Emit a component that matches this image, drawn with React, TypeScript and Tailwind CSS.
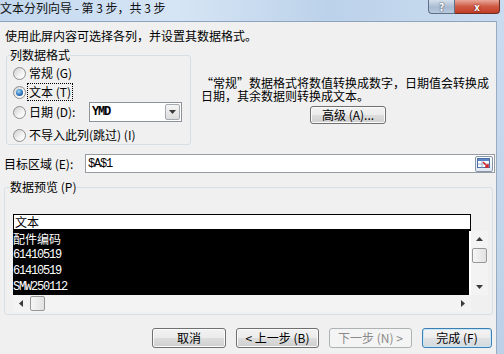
import React from "react";

// 文本分列向导 第3步 (Win7 风格对话框)

const mono = "font-['Liberation_Mono',monospace] tracking-[-1.2px]";

function Mn({ c }: { c: string }) {
  return <> ({c})</>;
}

function Radio({ checked }: { checked?: boolean }) {
  return (
    <span className="flex h-[13px] w-[13px] shrink-0 items-center justify-center rounded-full border border-[#8e8f8f] bg-[linear-gradient(135deg,#cfcfcf,#f4f4f4_60%,#ffffff)]">
      {checked && (
        <span className="h-[7px] w-[7px] rounded-full bg-[radial-gradient(circle_at_40%_35%,#9ad8f8,#2a6fb5_60%,#17457a)]" />
      )}
    </span>
  );
}

function WinButton({
  children,
  className,
  kind,
}: {
  children: React.ReactNode;
  className: string;
  kind?: "default" | "disabled";
}) {
  let look =
    "border-[#707070] text-black bg-[linear-gradient(#f2f2f2,#ebebeb_50%,#dddddd_50%,#cfcfcf)] shadow-[inset_0_0_0_1px_#fbfbfb]";
  if (kind === "default")
    look =
      "border-[#3c7fb1] text-black bg-[linear-gradient(#f4f4f4,#ececec_50%,#dfe3e6_50%,#d3d8dc)] shadow-[inset_0_0_0_1px_#c6e6f9]";
  if (kind === "disabled")
    look = "border-[#adb2b5] text-[#8a8a8a] bg-[#f4f4f4]";
  return (
    <div
      className={`flex items-center justify-center rounded-[3px] border text-[12px] leading-[14px] ${look} ${className}`}
    >
      {children}
    </div>
  );
}

function Tri({ dir }: { dir: "up" | "down" | "left" | "right" }) {
  const pts = {
    up: "0,4 3.5,0 7,4",
    down: "0,0 7,0 3.5,4",
    left: "4,0 4,7 0,3.5",
    right: "0,0 0,7 4,3.5",
  }[dir];
  const vert = dir === "up" || dir === "down";
  return (
    <svg width={vert ? 7 : 4} height={vert ? 4 : 7} viewBox={vert ? "0 0 7 4" : "0 0 4 7"}>
      <polygon points={pts} fill="#3a3a3a" />
    </svg>
  );
}

function RangeIcon() {
  return (
    <div className="flex h-[16px] w-[18px] items-center justify-center rounded-[2px] border border-[#8796a8] bg-[linear-gradient(#fdfdfd,#dfe6ee)]">
      <svg width="14" height="11" viewBox="0 0 14 11">
        <rect x="0.5" y="0.5" width="12" height="9" fill="#fff" stroke="#4a6fa5" />
        <rect x="1" y="1" width="11" height="2" fill="#5b86c4" />
        <line x1="1" y1="6" x2="12" y2="6" stroke="#9fb3cf" />
        <line x1="5" y1="3" x2="5" y2="9.5" stroke="#9fb3cf" />
        <path d="M6 4 L11 9 M8 9 L11 9 L11 6" stroke="#d4262b" strokeWidth="1.6" fill="none" />
      </svg>
    </div>
  );
}

function Thumb({ className }: { className: string }) {
  return (
    <div
      className={`rounded-[2px] border border-[#979797] bg-[linear-gradient(90deg,#f6f6f6,#e2e2e2)] ${className}`}
    />
  );
}

const rows = [
  { t: "配件编码", m: false },
  { t: "61410519", m: true },
  { t: "61410519", m: true },
  { t: "SMW250112", m: true },
];

export default function App() {
  return (
    <div className="flex h-[354px] w-[504px] flex-col overflow-hidden bg-[#c4d7ec] font-['Noto_Sans_CJK_SC','Noto_Sans',sans-serif] text-black">
      {/* 标题栏 */}
      <div className="flex h-[21px] shrink-0 items-start bg-[linear-gradient(90deg,#c3d8ef,#d6e5f5_35%,#bcd2ea_65%,#cadcf0)]">
        <div className="flex-1 text-[12px] leading-[16px] text-[#111]">文本分列向导 - 第 3 步，共 3 步</div>
        <div className="flex h-[14px] w-[27px] items-center justify-center rounded-bl-[4px] border border-t-0 border-[#5f7188] bg-[linear-gradient(#d5e0ec,#a9bbd1_55%,#b7c9dd)] text-[10px] font-bold leading-[12px] text-white [text-shadow:0_0_2px_#223]">
          ?
        </div>
        <div className="flex h-[14px] w-[45px] items-center justify-center rounded-br-[4px] border border-l-0 border-t-0 border-[#6b2e26] bg-[linear-gradient(#e9a899,#cf5a44_50%,#c23d28)] text-[10px] font-bold leading-[12px] text-white [text-shadow:0_0_2px_#400]">
          x
        </div>
        <div className="w-[4px]" />
      </div>

      <div className="flex flex-1">
        {/* 主体 */}
        <div className="flex w-[496px] flex-col border-t border-[#8fa3bc] bg-[#f0f0f0] pt-[6px]">
          <div className="pl-[5px] text-[12px] leading-[16px]">使用此屏内容可选择各列，并设置其数据格式。</div>

          <div className="mt-[3px] flex">
            <fieldset className="ml-[6px] w-[185px] rounded-[3px] border border-[#d5dfe5]">
              <legend className="ml-[3px] text-[12px] leading-[16px]">列数据格式</legend>
              <div className="flex flex-col pb-[1px] text-[12px] leading-[16px]">
                <div className="mt-[2px] flex h-[16px] items-center pl-[6px]">
                  <Radio />
                  <span className="ml-[3px]">
                    常规<Mn c="G" />
                  </span>
                </div>
                <div className="mt-[3px] flex h-[16px] items-center pl-[6px]">
                  <Radio checked />
                  <span className="ml-[2px] px-[1px] outline outline-1 outline-dotted outline-black">
                    文本<Mn c="T" />
                  </span>
                </div>
                <div className="mt-[2px] flex h-[20px] items-center pl-[6px]">
                  <Radio />
                  <span className="ml-[3px] w-[60px]">
                    日期<Mn c="D" />:
                  </span>
                  <div className="flex h-[20px] w-[93px] items-center border border-[#8f949a] bg-white pr-[1px]">
                    <span className={`flex-1 pl-[2px] text-[12px] font-bold leading-[16px] ${mono}`}>YMD</span>
                    <div className="flex h-[16px] w-[15px] items-center justify-center rounded-[2px] border border-[#a6abb1] bg-[linear-gradient(#f5f5f5,#dcdcdc)]">
                      <Tri dir="down" />
                    </div>
                  </div>
                </div>
                <div className="mt-[5px] flex h-[16px] items-center pl-[6px]">
                  <Radio />
                  <span className="ml-[3px]">
                    不导入此列(跳过)<Mn c="I" />
                  </span>
                </div>
              </div>
            </fieldset>

            <div className="ml-[10px] flex flex-col pt-[29px]">
              <div className="text-[12px] leading-[13px]">“常规”数据格式将数值转换成数字，日期值会转换成</div>
              <div className="text-[12px] leading-[13px]">日期，其余数据则转换成文本。</div>
              <WinButton className="ml-[109px] mt-[4px] h-[18px] w-[76px]">
                高级<Mn c="A" />...
              </WinButton>
            </div>
          </div>

          <div className="mt-[9px] flex items-center pl-[4px] pr-[1px]">
            <span className="w-[81px] text-[12px] leading-[16px]">
              目标区域<Mn c="E" />:
            </span>
            <div className="flex h-[19px] flex-1 items-center border border-[#979ca3] bg-white pr-[1px]">
              <span className={`flex-1 pl-[2px] text-[12px] leading-[16px] ${mono}`}>$A$1</span>
              <RangeIcon />
            </div>
          </div>

          <fieldset className="ml-[4px] mt-[6px] w-[489px] rounded-[3px] border border-[#d5dfe5]">
            <legend className="ml-[5px] text-[12px] leading-[16px]">
              数据预览<Mn c="P" />
            </legend>
            <div className="ml-[8px] mt-[19px] mb-[2px] grid grid-cols-[458px_17px] grid-rows-[17px_64px_17px]">
              <div className="border-l border-r border-t border-b-2 border-black bg-white pl-[1px] text-[12px] leading-[14px]">
                文本
              </div>
              <div />
              <div className="flex flex-col border-r-2 border-white bg-black text-white">
                {rows.map((r, i) => (
                  <div
                    key={i}
                    className={`h-[16px] text-[12px] leading-[16px] ${r.m ? mono : ""}`}
                  >
                    {r.t}
                  </div>
                ))}
              </div>
              <div className="flex flex-col items-center bg-[#f3f3f3]">
                <div className="flex h-[16px] w-full items-center justify-center">
                  <Tri dir="up" />
                </div>
                <Thumb className="mt-[1px] h-[15px] w-[15px]" />
                <div className="flex-1" />
                <div className="flex h-[16px] w-full items-center justify-center">
                  <Tri dir="down" />
                </div>
              </div>
              <div className="flex items-center bg-[#f3f3f3]">
                <div className="flex h-full w-[16px] items-center justify-center">
                  <Tri dir="left" />
                </div>
                <Thumb className="ml-[1px] h-[15px] w-[15px]" />
                <div className="flex-1" />
                <div className="flex h-full w-[16px] items-center justify-center">
                  <Tri dir="right" />
                </div>
              </div>
              <div />
            </div>
          </fieldset>

          <div className="mt-[13px] flex justify-end gap-[10px] pr-[4px]">
            <WinButton className="h-[20px] w-[74px]">取消</WinButton>
            <WinButton className="h-[20px] w-[83px]">
              &lt; 上一步<Mn c="B" />
            </WinButton>
            <WinButton className="h-[20px] w-[83px]" kind="disabled">
              下一步<Mn c="N" /> &gt;
            </WinButton>
            <WinButton className="h-[20px] w-[70px]" kind="default">
              完成<Mn c="F" />
            </WinButton>
          </div>
        </div>
        <div className="w-[1px] bg-[#9aabbf]" />
        <div className="flex-1 bg-[linear-gradient(#c9dbef,#bcd1e8)]" />
      </div>
    </div>
  );
}
